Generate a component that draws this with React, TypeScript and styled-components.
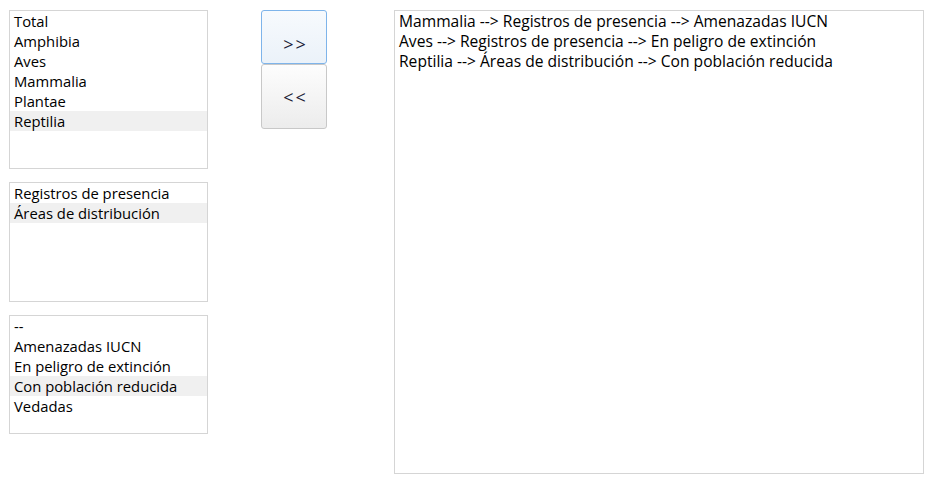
import React from "react";
import styled, { createGlobalStyle } from "styled-components";

const Global = createGlobalStyle`
  html, body { margin: 0; padding: 0; background: #ffffff; }
  body { font-family: "Open Sans", "Noto Sans", sans-serif; color: #000; }
`;

const Page = styled.div`
  display: flex;
  align-items: flex-start;
  padding: 10px 0 0 9px;
  width: 936px;
  height: 482px;
  box-sizing: border-box;
`;

const LeftColumn = styled.div`
  display: flex;
  flex-direction: column;
  gap: 13px;
  width: 199px;
`;

const ListBox = styled.div<{ $h: number; $w?: number }>`
  box-sizing: border-box;
  width: ${(p) => (p.$w ? `${p.$w}px` : "100%")};
  height: ${(p) => p.$h}px;
  border: 1px solid #d5d5d5;
  background: #fff;
  overflow: hidden;
`;

const Item = styled.div<{ $sel?: boolean; $size?: number }>`
  height: 20px;
  line-height: 20.5px;
  padding-left: 4px;
  font-size: ${(p) => p.$size ?? 14.8}px;
  white-space: nowrap;
  background: ${(p) => (p.$sel ? "#f0f0f0" : "transparent")};
`;

const ButtonColumn = styled.div`
  display: flex;
  flex-direction: column;
  margin-left: 53px;
  width: 66px;
`;

const Btn = styled.button<{ $focus?: boolean; $h: number; $pt: number }>`
  box-sizing: border-box;
  height: ${(p) => p.$h}px;
  width: 100%;
  display: flex;
  align-items: center;
  justify-content: center;
  padding: ${(p) => p.$pt}px 0 0 3px;
  border: 1px solid ${(p) => (p.$focus ? "#7eb4ea" : "#c8c8c8")};
  border-radius: 3px;
  background: ${(p) =>
    p.$focus
      ? "linear-gradient(#f7fafd, #ebf2f9)"
      : "linear-gradient(#fdfdfd, #ececec)"};
  font-family: "Open Sans", "Noto Sans", sans-serif;
  font-size: 18px;
  color: #1c1c38;
  letter-spacing: 2px;
  cursor: default;
`;

const RightBox = styled(ListBox)`
  margin-left: 67px;
`;

const species = ["Total", "Amphibia", "Aves", "Mammalia", "Plantae", "Reptilia"];
const sources = ["Registros de presencia", "Áreas de distribución"];
const statuses = ["--", "Amenazadas IUCN", "En peligro de extinción", "Con población reducida", "Vedadas"];
const selected = [
  "Mammalia --> Registros de presencia --> Amenazadas IUCN",
  "Aves --> Registros de presencia --> En peligro de extinción",
  "Reptilia --> Áreas de distribución --> Con población reducida",
];

export default function App() {
  return (
    <>
      <Global />
      <Page>
        <LeftColumn>
          <ListBox $h={159}>
            {species.map((s) => (
              <Item key={s} $sel={s === "Reptilia"}>{s}</Item>
            ))}
          </ListBox>
          <ListBox $h={120}>
            {sources.map((s) => (
              <Item key={s} $sel={s === "Áreas de distribución"}>{s}</Item>
            ))}
          </ListBox>
          <ListBox $h={119}>
            {statuses.map((s) => (
              <Item key={s} $sel={s === "Con población reducida"}>{s}</Item>
            ))}
          </ListBox>
        </LeftColumn>
        <ButtonColumn>
          <Btn $focus $h={54} $pt={14}>&gt;&gt;</Btn>
          <Btn $h={65} $pt={1}>&lt;&lt;</Btn>
        </ButtonColumn>
        <RightBox $h={464} $w={530}>
          {selected.map((s) => (
            <Item key={s} $size={15.6}>{s}</Item>
          ))}
        </RightBox>
      </Page>
    </>
  );
}
